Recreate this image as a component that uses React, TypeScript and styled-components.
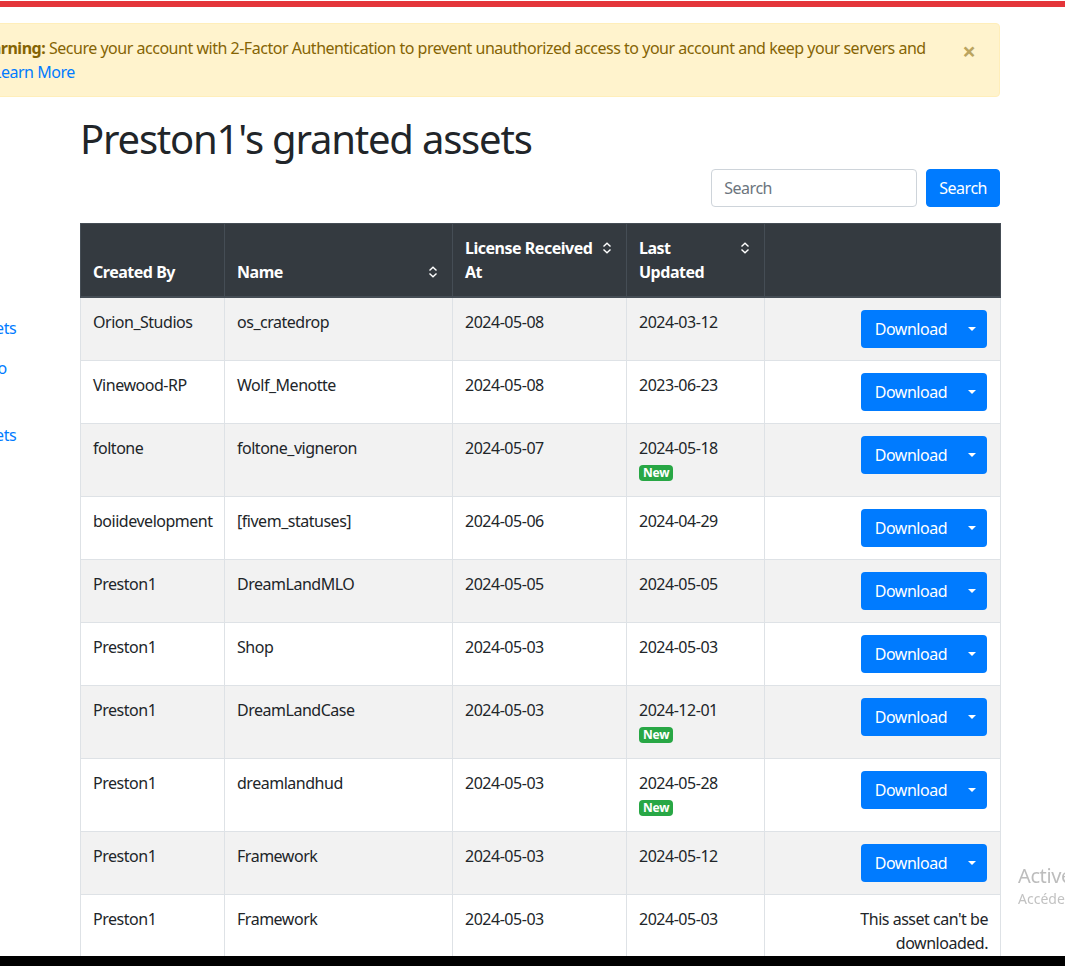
import React from "react";
import styled, { createGlobalStyle } from "styled-components";

const GlobalStyle = createGlobalStyle`
  * { box-sizing: border-box; }
  html, body { margin: 0; padding: 0; overflow: hidden; background: #fff; }
  body {
    font-family: "Noto Sans", "Open Sans", sans-serif;
    font-size: 16px;
    line-height: 24px;
    color: #212529;
    letter-spacing: -0.03em;
  }
`;

const TopBar = styled.div`
  height: 6px;
  margin-top: 1px;
  background: #e4353a;
`;

const Shell = styled.div`
  margin: 16px 0 0 -44px;
  width: 1044px;
`;

const Alert = styled.div`
  position: relative;
  background: #fff3cd;
  border: 1px solid #ffeeba;
  border-radius: 4px;
  color: #856404;
  padding: 12px 64px 12px 20px;
`;

const AlertLine = styled.div`
  white-space: nowrap;
`;

const LearnMore = styled.a`
  display: block;
  margin-left: 16px;
  color: #007bff;
  text-decoration: none;
`;

const CloseButton = styled.button`
  position: absolute;
  top: 3px;
  right: 0;
  padding: 12px 23px;
  border: 0;
  background: transparent;
  font-family: "Noto Sans", sans-serif;
  font-size: 24px;
  font-weight: 700;
  line-height: 24px;
  color: #856404;
  opacity: 0.55;
`;

const Columns = styled.div`
  display: grid;
  grid-template-columns: 109px 920px;
  column-gap: 15px;
  margin-top: 18px;
`;

const Sidebar = styled.nav`
  padding: 201px 0 0 15px;
  display: flex;
  flex-direction: column;
`;

const NavGroup = styled.div<{ $gap?: number }>`
  display: flex;
  flex-direction: column;
  gap: 16px;
  margin-top: ${(p) => p.$gap ?? 0}px;
`;

const NavLink = styled.a`
  color: #007bff;
  text-decoration: none;
  white-space: nowrap;
`;

const Main = styled.main`
  display: flex;
  flex-direction: column;
`;

const Title = styled.h1`
  margin: 0;
  font-size: 40px;
  font-weight: 400;
  line-height: 48px;
  letter-spacing: -0.03em;
  color: #212529;
`;

const SearchRow = styled.form`
  display: flex;
  justify-content: flex-end;
  gap: 9px;
  margin-top: 6px;
`;

const SearchInput = styled.input`
  width: 206px;
  height: 38px;
  padding: 6px 12px;
  border: 1px solid #ced4da;
  border-radius: 4px;
  font-family: inherit;
  font-size: 16px;
  letter-spacing: -0.03em;
  color: #495057;
  &::placeholder { color: #6c757d; }
`;

const PrimaryButton = styled.button`
  height: 38px;
  padding: 6px 12px;
  border: 1px solid #007bff;
  border-radius: 4px;
  background: #007bff;
  color: #fff;
  font-family: inherit;
  font-size: 16px;
  line-height: 24px;
  letter-spacing: -0.03em;
`;

const Table = styled.table`
  margin-top: 16px;
  width: 920px;
  border-collapse: collapse;
  table-layout: fixed;
`;

const Th = styled.th`
  padding: 12px;
  vertical-align: bottom;
  text-align: left;
  font-weight: 700;
  color: #fff;
  background: #343a40;
  border: 1px solid #454d55;
  border-bottom-width: 2px;
`;

const SortIcon = styled.span`
  float: right;
  height: 24px;
  margin-left: 8px;
  margin-right: 2px;
  display: flex;
  align-items: center;
`;

const BodyRow = styled.tr`
  &:nth-of-type(odd) { background: #f2f2f2; }
`;

const Td = styled.td<{ $right?: boolean }>`
  padding: 12px;
  vertical-align: top;
  border: 1px solid #dee2e6;
  text-align: ${(p) => (p.$right ? "right" : "left")};
`;

const BadgeLine = styled.div`
  height: 24px;
  display: flex;
  align-items: center;
  padding-top: 2px;
`;

const Badge = styled.span`
  display: inline-block;
  padding: 2px 4px;
  border-radius: 4px;
  background: #28a745;
  color: #fff;
  font-size: 12px;
  font-weight: 700;
  line-height: 12px;
  letter-spacing: -0.02em;
`;

const SplitGroup = styled.div`
  display: inline-flex;
  vertical-align: top;
  height: 38px;
  margin-right: 1px;
  background: #007bff;
  border-radius: 4px;
  overflow: hidden;
`;

const SplitPart = styled.button`
  height: 38px;
  border: 0;
  background: transparent;
  color: #fff;
  font-family: inherit;
  font-size: 16px;
  line-height: 24px;
  letter-spacing: -0.03em;
`;

const SplitMain = styled(SplitPart)`
  padding: 7px 11px 7px 14px;
`;

const SplitToggle = styled(SplitPart)`
  padding: 0 11px 0 10px;
  display: flex;
  align-items: center;
  &::after {
    content: "";
    display: block;
    border-top: 4px solid #fff;
    border-left: 4px solid transparent;
    border-right: 4px solid transparent;
  }
`;

const Watermark = styled.div`
  position: fixed;
  left: 1018px;
  top: 862px;
  white-space: nowrap;
  color: #bdbdbd;
  letter-spacing: 0;
`;

const WatermarkTitle = styled.div`
  font-size: 20px;
  line-height: 28px;
  letter-spacing: -0.02em;
`;

const WatermarkSub = styled.div`
  font-size: 14px;
  line-height: 18px;
  color: #c2c2c2;
`;

const BottomBar = styled.div`
  position: fixed;
  left: 0;
  right: 0;
  bottom: 0;
  height: 10px;
  background: #000;
`;

const Sort = () => (
  <SortIcon>
    <svg width="10" height="12" viewBox="0 0 10 12" fill="none" stroke="#fff" strokeWidth="1.4">
      <path d="M1.5 4.6 L5 1.2 L8.5 4.6 M1.5 7.4 L5 10.8 L8.5 7.4" />
    </svg>
  </SortIcon>
);

type Row = {
  by: string;
  name: string;
  received: string;
  updated: string;
  isNew?: boolean;
  locked?: boolean;
};

const rows: Row[] = [
  { by: "Orion_Studios", name: "os_cratedrop", received: "2024-05-08", updated: "2024-03-12" },
  { by: "Vinewood-RP", name: "Wolf_Menotte", received: "2024-05-08", updated: "2023-06-23" },
  { by: "foltone", name: "foltone_vigneron", received: "2024-05-07", updated: "2024-05-18", isNew: true },
  { by: "boiidevelopment", name: "[fivem_statuses]", received: "2024-05-06", updated: "2024-04-29" },
  { by: "Preston1", name: "DreamLandMLO", received: "2024-05-05", updated: "2024-05-05" },
  { by: "Preston1", name: "Shop", received: "2024-05-03", updated: "2024-05-03" },
  { by: "Preston1", name: "DreamLandCase", received: "2024-05-03", updated: "2024-12-01", isNew: true },
  { by: "Preston1", name: "dreamlandhud", received: "2024-05-03", updated: "2024-05-28", isNew: true },
  { by: "Preston1", name: "Framework", received: "2024-05-03", updated: "2024-05-12" },
  { by: "Preston1", name: "Framework", received: "2024-05-03", updated: "2024-05-03", locked: true },
];

export default function App() {
  return (
    <>
      <GlobalStyle />
      <TopBar />
      <Shell>
        <Alert>
          <AlertLine>
            <strong>Warning:</strong> Secure your account with 2-Factor Authentication to prevent
            unauthorized access to your account and keep your servers and
          </AlertLine>
          <LearnMore href="#">Learn More</LearnMore>
          <CloseButton aria-label="Close">×</CloseButton>
        </Alert>
        <Columns>
          <Sidebar>
            <NavGroup>
              <NavLink href="#">Assets</NavLink>
              <NavLink href="#">Logo</NavLink>
            </NavGroup>
            <NavGroup $gap={43}>
              <NavLink href="#">Assets</NavLink>
            </NavGroup>
          </Sidebar>
          <Main>
            <Title>Preston1's granted assets</Title>
            <SearchRow onSubmit={(e) => e.preventDefault()}>
              <SearchInput placeholder="Search" />
              <PrimaryButton type="submit">Search</PrimaryButton>
            </SearchRow>
            <Table>
              <colgroup>
                <col style={{ width: 144 }} />
                <col style={{ width: 228 }} />
                <col style={{ width: 174 }} />
                <col style={{ width: 138 }} />
                <col style={{ width: 236 }} />
              </colgroup>
              <thead>
                <tr>
                  <Th>Created By</Th>
                  <Th>
                    <Sort />
                    Name
                  </Th>
                  <Th>
                    <Sort />
                    License Received At
                  </Th>
                  <Th>
                    <Sort />
                    Last Updated
                  </Th>
                  <Th />
                </tr>
              </thead>
              <tbody>
                {rows.map((r, i) => (
                  <BodyRow key={i}>
                    <Td>{r.by}</Td>
                    <Td>{r.name}</Td>
                    <Td>{r.received}</Td>
                    <Td>
                      {r.updated}
                      {r.isNew && (
                        <BadgeLine>
                          <Badge>New</Badge>
                        </BadgeLine>
                      )}
                    </Td>
                    <Td $right>
                      {r.locked ? (
                        "This asset can't be downloaded."
                      ) : (
                        <SplitGroup>
                          <SplitMain>Download</SplitMain>
                          <SplitToggle aria-label="More" />
                        </SplitGroup>
                      )}
                    </Td>
                  </BodyRow>
                ))}
              </tbody>
            </Table>
          </Main>
        </Columns>
      </Shell>
      <Watermark>
        <WatermarkTitle>Activer Windows</WatermarkTitle>
        <WatermarkSub>Accédez aux paramètres pour activer Windows.</WatermarkSub>
      </Watermark>
      <BottomBar />
    </>
  );
}
